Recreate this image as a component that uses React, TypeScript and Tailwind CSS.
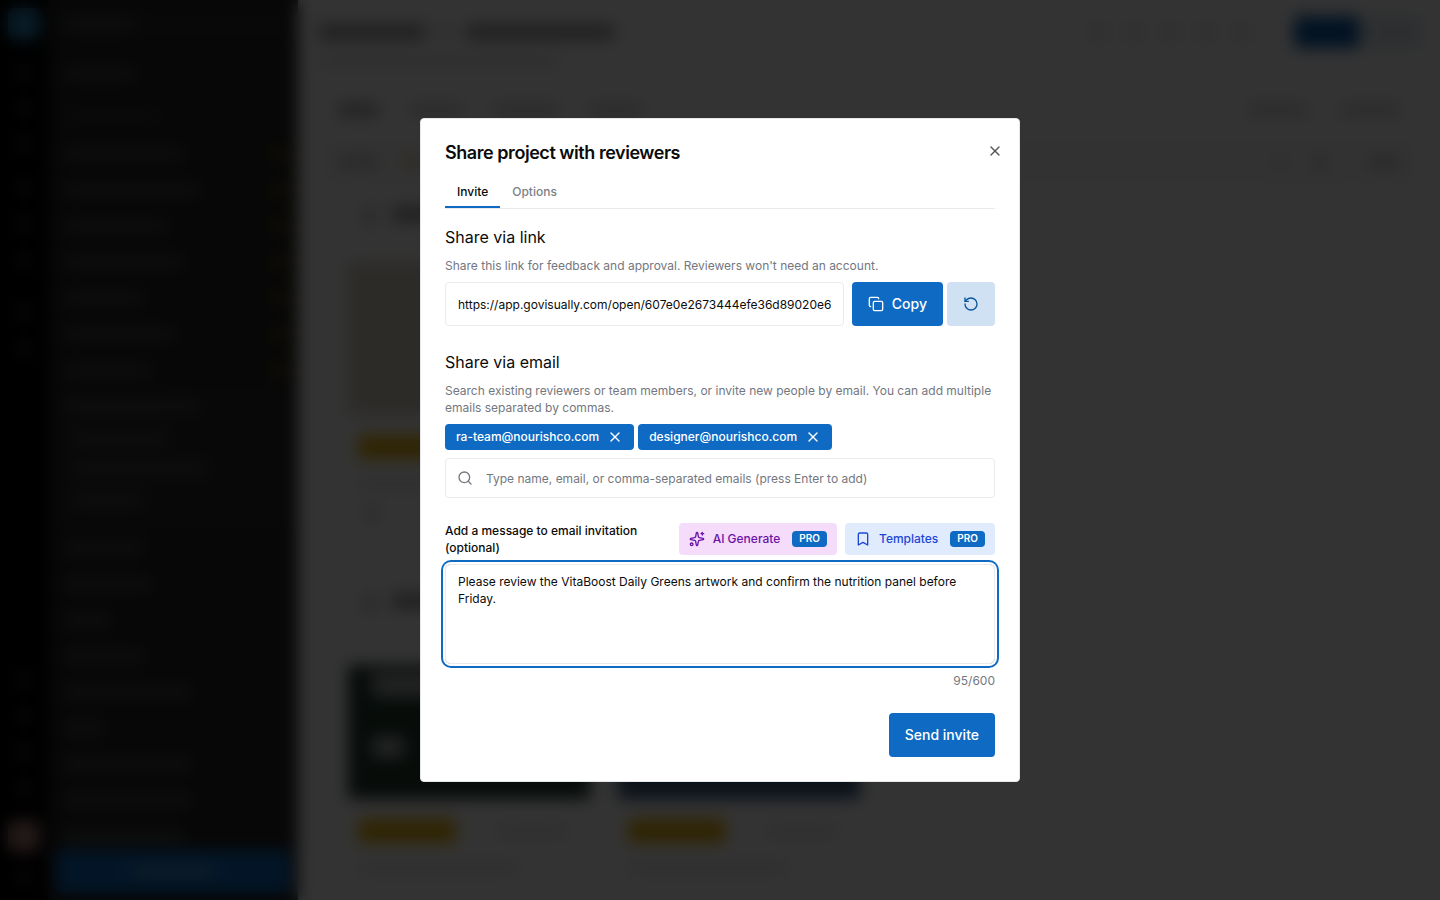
import { useState } from 'react';
import { Bookmark, Copy, RotateCcw, Search, Sparkles, X } from 'lucide-react';
import clsx from 'clsx';

const MAX_MESSAGE = 600;

const railTop = ['mt-6', 'mt-5', 'mt-5', 'mt-7', 'mt-5', 'mt-5', 'mt-9', 'mt-5'];

const folders = ['w-30', 'w-34', 'w-26', 'w-30', 'w-20', 'w-28', 'w-22'];
const subFolders = ['w-24', 'w-34', 'w-18'];
const moreFolders = ['w-20', 'w-22', 'w-12', 'w-20', 'w-32', 'w-10', 'w-32', 'w-32', 'w-30'];

function Bar({ className }: { className: string }) {
  return <div className={clsx('shrink-0 rounded', className)} />;
}

function Rail() {
  return (
    <div className="flex w-12 shrink-0 flex-col items-center bg-black pt-2 pb-4">
      <Bar className="size-8 rounded-lg bg-[#2f8cc4]" />
      {railTop.map((margin, i) => (
        <Bar key={i} className={clsx('size-4 bg-[#262626]', margin)} />
      ))}
      <div className="flex-1" />
      <div className="flex flex-col gap-5">
        {[0, 1, 2, 3].map((i) => (
          <Bar key={i} className="size-4 bg-[#262626]" />
        ))}
      </div>
      <Bar className="mt-6 size-8 rounded-lg bg-[#b0807a]" />
      <Bar className="mt-4 size-4 bg-[#262626]" />
    </div>
  );
}

function Sidebar() {
  return (
    <div className="flex w-[250px] shrink-0 flex-col overflow-hidden bg-[#242424] px-2 pb-2">
      <div className="mt-3 flex h-6 shrink-0 items-center bg-[#2a2a2a] px-2">
        <Bar className="h-3 w-18 bg-[#4a4a4a]" />
      </div>
      <div className="mt-5 flex h-9 shrink-0 items-center px-2">
        <Bar className="h-3 w-18 bg-[#4a4a4a]" />
      </div>
      <div className="mt-1 flex h-10 shrink-0 items-center px-2">
        <Bar className="h-2 w-24 bg-[#404040]" />
      </div>
      {folders.map((width, i) => (
        <div key={i} className="flex h-9 shrink-0 items-center justify-between pl-2">
          <Bar className={clsx('h-3 bg-[#4a4a4a]', width)} />
          <Bar className="h-3.5 w-5 bg-[#554018]" />
        </div>
      ))}
      <div className="shrink-0 bg-[#2a2a2a] pb-4">
        <div className="flex h-9 items-center pl-2">
          <Bar className="h-3 w-34 bg-[#4a4a4a]" />
        </div>
        {subFolders.map((width, i) => (
          <div key={i} className="flex h-[30px] items-center pl-4">
            <Bar className={clsx('h-3 bg-[#4a4a4a]', width)} />
          </div>
        ))}
      </div>
      <div className="min-h-0 flex-1 overflow-hidden">
        {moreFolders.map((width, i) => (
          <div key={i} className="flex h-9 items-center pl-2">
            <Bar className={clsx('h-3 bg-[#4a4a4a]', width)} />
          </div>
        ))}
      </div>
      <div className="flex h-[42px] shrink-0 items-center justify-center rounded bg-[#0e6ac2]">
        <Bar className="h-3 w-20 bg-[#5590c4]" />
      </div>
    </div>
  );
}

function CardFooter() {
  return (
    <div className="px-2.5 pt-5">
      <div className="flex items-center gap-10">
        <Bar className="h-6 w-[98px] bg-[#ecb40c]" />
        <Bar className="h-2.5 w-18 bg-[#e2e2e2]" />
      </div>
      <Bar className="mt-5 h-2.5 w-40 bg-[#e2e2e2]" />
    </div>
  );
}

function Board() {
  return (
    <div className="min-w-0 flex-1 overflow-hidden bg-white">
      <div className="flex items-start justify-between pt-4 pr-5 pl-5">
        <div>
          <div className="flex h-8 items-center gap-3">
            <Bar className="h-4 w-27 bg-[#a0a0a0]" />
            <Bar className="h-1 w-4 bg-[#a0a0a0]" />
            <Bar className="h-4 w-37 bg-[#a0a0a0]" />
          </div>
          <Bar className="mt-2 h-2.5 w-60 bg-[#e0e0e0]" />
        </div>
        <div className="flex items-center">
          <div className="mr-6 flex gap-5">
            {[0, 1, 2, 3, 4].map((i) => (
              <Bar key={i} className="size-4 bg-[#e4e4e4]" />
            ))}
          </div>
          <Bar className="mr-2 ml-5 h-8 w-[66px] bg-[#0e5fae]" />
          <Bar className="h-8 w-13 bg-[#dbe5f0]" />
        </div>
      </div>

      <div className="mt-5 flex h-12 items-center gap-8 px-10">
        <Bar className="h-3 w-10 bg-[#a0a0a0]" />
        <Bar className="h-3 w-13 bg-[#d4d4d4]" />
        <Bar className="h-3 w-16 bg-[#d4d4d4]" />
        <Bar className="h-3 w-13 bg-[#d4d4d4]" />
        <div className="flex-1" />
        <Bar className="h-3 w-15 bg-[#d4d4d4]" />
        <Bar className="h-3 w-15 bg-[#d4d4d4]" />
      </div>

      <div className="mx-6 mt-1 flex h-12 items-center gap-6 bg-[#fafafa] px-4">
        <Bar className="h-3 w-10 bg-[#cacaca]" />
        <Bar className="h-4 w-6 bg-[#f0e0c0]" />
        <div className="flex-1" />
        <Bar className="size-4 bg-[#e8e8e8]" />
        <Bar className="size-4 bg-[#dadada]" />
        <Bar className="ml-4 h-3 w-8 bg-[#cacaca]" />
      </div>

      <div className="mt-5 px-[50px]">
        <div className="flex h-10 items-start gap-4 pl-4">
          <Bar className="h-5 w-3 bg-[#cacaca]" />
          <Bar className="h-4 w-40 bg-[#a0a0a0]" />
        </div>
        <div className="mt-4 h-[153px] w-[242px] bg-[#dcd6c8]" />
        <div className="h-[154px] w-[242px]">
          <CardFooter />
          <Bar className="mt-4 ml-4 size-4 rounded-full bg-[#d4d4d4]" />
        </div>
      </div>

      <div className="mt-6 px-[50px]">
        <div className="flex h-10 items-start gap-4 pl-4">
          <Bar className="h-5 w-3 bg-[#cacaca]" />
          <Bar className="h-4 w-40 bg-[#a0a0a0]" />
        </div>
        <div className="mt-8 flex gap-7">
          <div className="w-[242px] shrink-0">
            <div className="flex h-[134px] flex-col items-start gap-6 bg-[#233d30] p-6 pt-2">
              <Bar className="h-6 w-40 bg-[#a8aeab]" />
              <Bar className="mt-4 h-5 w-8 bg-[#b0b6b3]" />
            </div>
            <CardFooter />
          </div>
          <div className="w-[242px] shrink-0">
            <div className="h-[134px] bg-[#3c5a80]" />
            <CardFooter />
          </div>
        </div>
      </div>
    </div>
  );
}

function EmailChip({ email, onRemove }: { email: string; onRemove: () => void }) {
  return (
    <span className="flex h-[26px] items-center gap-2 rounded bg-[#0e6ac2] px-[11px] text-xs font-medium text-white">
      {email}
      <button type="button" aria-label={`Remove ${email}`} onClick={onRemove}>
        <X className="size-4" />
      </button>
    </span>
  );
}

function ProBadge() {
  return (
    <span className="ml-1 flex h-4 items-center rounded bg-[#0e6ac2] px-[7px] text-[10px] font-semibold text-white">
      PRO
    </span>
  );
}

function ShareDialog() {
  const [emails, setEmails] = useState(['ra-team@nourishco.com', 'designer@nourishco.com']);
  const [message, setMessage] = useState(
    'Please review the VitaBoost Daily Greens artwork and confirm the nutrition panel before Friday.'
  );

  return (
    <div
      role="dialog"
      aria-modal="true"
      aria-labelledby="share-title"
      className="relative w-full max-w-[600px] rounded border border-gray-200 bg-white p-6 text-[#0b0b0c]"
    >
      <h2 id="share-title" className="text-lg leading-5 font-semibold tracking-tight">
        Share project with reviewers
      </h2>
      <button type="button" aria-label="Close" className="absolute top-6 right-4 text-[#555]">
        <X className="size-4" />
      </button>

      <div role="tablist" className="mt-3 flex border-b border-[#e8eaed] text-xs font-medium">
        <button
          type="button"
          role="tab"
          aria-selected="true"
          className="h-[33px] border-b-2 border-[#0e6ac2] px-3 pt-0.5"
        >
          Invite
        </button>
        <button
          type="button"
          role="tab"
          aria-selected="false"
          className="h-[33px] border-b-2 border-transparent px-3 pt-0.5 text-[#7b7f87]"
        >
          Options
        </button>
      </div>

      <h3 className="mt-4 text-base">Share via link</h3>
      <p className="mt-2 text-xs leading-[17px] text-[#73777f]">
        Share this link for feedback and approval. Reviewers won't need an account.
      </p>
      <div className="mt-2 flex">
        <input
          type="text"
          readOnly
          aria-label="Share link"
          value="https://app.govisually.com/open/607e0e2673444efe36d89020e6"
          className="mr-2 h-11 min-w-0 flex-1 rounded border border-[#e8eaed] pr-2 pl-3 text-xs outline-none"
        />
        <button
          type="button"
          className="mr-1 flex h-11 items-center gap-2 rounded bg-[#0e6ac2] px-4 text-sm font-medium text-white"
        >
          <Copy className="size-4" />
          Copy
        </button>
        <button
          type="button"
          aria-label="Reset link"
          className="flex h-11 w-12 items-center justify-center rounded bg-[#cfe1f3] text-[#0b559b]"
        >
          <RotateCcw className="size-4" />
        </button>
      </div>

      <h3 className="mt-6 text-base">Share via email</h3>
      <p className="mt-2 text-xs leading-[17px] text-[#73777f]">
        Search existing reviewers or team members, or invite new people by email. You can add multiple
        emails separated by commas.
      </p>
      <div className="mt-2 flex flex-wrap gap-1">
        {emails.map((email) => (
          <EmailChip
            key={email}
            email={email}
            onRemove={() => setEmails(emails.filter((e) => e !== email))}
          />
        ))}
      </div>
      <div className="mt-2 flex h-10 items-center rounded border border-[#e8eaed] pl-[11px] focus-within:border-[#0e6ac2]">
        <Search className="size-4 shrink-0 text-[#73777f]" />
        <input
          type="text"
          aria-label="Add reviewers"
          placeholder="Type name, email, or comma-separated emails (press Enter to add)"
          className="h-full min-w-0 flex-1 px-[13px] text-xs outline-none placeholder:text-[#73777f]"
        />
      </div>

      <div className="mt-6 flex items-center gap-2">
        <label htmlFor="message" className="flex-1 text-xs leading-[17px] font-medium">
          Add a message to email invitation (optional)
        </label>
        <button
          type="button"
          className="flex h-8 items-center gap-2 rounded bg-[#f6dcfb] px-2.5 text-xs font-medium text-[#6b13a9]"
        >
          <Sparkles className="size-4" />
          AI Generate
          <ProBadge />
        </button>
        <button
          type="button"
          className="flex h-8 items-center gap-2 rounded bg-[#e0ecfe] px-2.5 text-xs font-medium text-[#1d46d8]"
        >
          <Bookmark className="size-4" />
          Templates
          <ProBadge />
        </button>
      </div>
      <textarea
        id="message"
        maxLength={MAX_MESSAGE}
        value={message}
        onChange={(e) => setMessage(e.target.value)}
        className="mt-2 block h-[100px] w-full resize-none rounded-md border border-[#e8eaed] px-3 py-2 text-xs leading-[17px] ring-2 ring-[#0e6ac2] ring-offset-2 outline-none"
      />
      <p className="mt-2 text-right text-xs leading-[17px] text-[#73777f]">
        {message.length}/{MAX_MESSAGE}
      </p>

      <div className="mt-6 flex justify-end">
        <button
          type="button"
          className="h-11 rounded bg-[#0e6ac2] px-4 text-sm font-medium text-white"
        >
          Send invite
        </button>
      </div>
    </div>
  );
}

export default function App() {
  return (
    <div className="relative h-screen overflow-hidden font-['Inter',sans-serif]">
      <div aria-hidden="true" className="flex h-full">
        <Rail />
        <Sidebar />
        <Board />
      </div>
      <div className="fixed inset-0 flex items-center justify-center bg-black/80 backdrop-blur-sm">
        <ShareDialog />
      </div>
    </div>
  );
}
